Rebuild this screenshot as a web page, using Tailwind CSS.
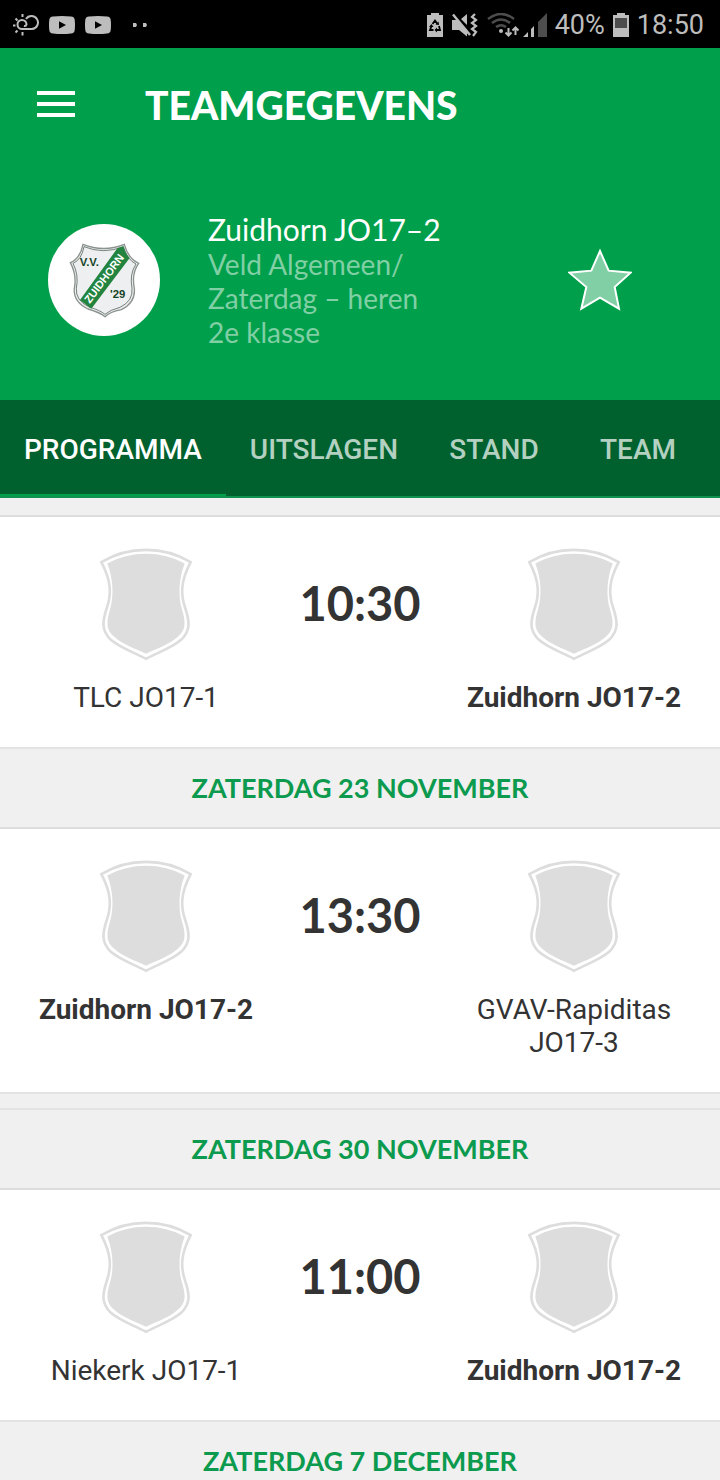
<!DOCTYPE html>
<html lang="nl">
<head>
<meta charset="utf-8">
<meta name="viewport" content="width=device-width, initial-scale=1">
<title>Teamgegevens</title>
<script src="https://cdn.jsdelivr.net/npm/@tailwindcss/browser@4"></script>
</head>
<body class="bg-[#f0f0f0] font-['Roboto',sans-serif] text-[#333333]">
<svg class="hidden" aria-hidden="true">
  <symbol id="shield" viewBox="56 38 284 344">
    <path d="M63 82Q125 45 198 45Q271 45 333 82C302 140 302 180 317 222C330 262 333 288 305 316C275 342 240 352 198 374C156 352 121 342 91 316C63 288 66 262 79 222C94 180 94 140 63 82Z" fill="#fff" stroke="#ddd" stroke-width="8"/>
    <path d="M81 86Q135 57 198 57Q261 57 315 86C297 130 295 185 306 222C318 262 320 284 295 307C268 331 238 341 198 359C158 341 128 331 101 307C76 284 78 262 90 222C101 185 99 130 81 86Z" fill="#ddd"/>
  </symbol>
  <symbol id="video" viewBox="0 0 26 18">
    <path fill="#bdbdbd" fill-rule="evenodd" d="M4 .5Q13-.5 22 .5Q25.500 .8 25.700 4Q26.300 9 25.700 14Q25.500 17.200 22 17.500Q13 18.500 4 17.500Q.5 17.200 .3 14Q-.3 9 .3 4Q.5 .8 4 .5ZM10 5.300V12.700L17 9Z"/>
  </symbol>
</svg>

<div class="flex h-12 items-center justify-between bg-black pt-0.5 pr-4 pl-3 text-[#bdbdbd]">
  <div class="flex items-center gap-2.5">
    <svg class="h-[22px] w-7" viewBox="0 0 28 22" fill="none" stroke="#bdbdbd" stroke-width="2" aria-hidden="true">
      <path d="M14 5A6.500 6.500 0 1 1 20 15H10A4.500 4.500 0 1 1 14.500 10.500Q14 12.500 12 12"/>
      <path d="M10.500 0V3M10.500 18V21.500M1 11.500H3.500M3.500 4.500L5.500 6.500M3.500 18.500L5.500 16.500"/>
    </svg>
    <svg class="-ml-px h-[18px] w-[26px]" aria-hidden="true"><use href="#video"/></svg>
    <svg class="h-[18px] w-[26px]" aria-hidden="true"><use href="#video"/></svg>
    <svg class="ml-3 h-1 w-[14px]" viewBox="0 0 14 4" fill="#bdbdbd" aria-hidden="true"><path d="M0 0H3L4 2L3 4H0ZM10 0H13L14 2L13 4H10Z"/></svg>
  </div>
  <div class="flex items-center gap-2 text-[27px] leading-8">
    <svg class="h-6 w-4" viewBox="0 0 16 24" aria-hidden="true">
      <path fill="#bdbdbd" d="M4 0H12V2H16V24H0V2H4Z"/>
      <g fill="none" stroke="#000" stroke-width="1.800"><path d="M5.500 11L8 7.500L10.500 11M12 13L13 17H9.500M6.500 17H3L4.500 13"/></g>
      <path d="M8.500 11.500L12 12L11.500 8.500ZM10 14.500V19.500L7.500 17ZM2 14L4.500 11L6.500 14Z"/>
    </svg>
    <svg class="h-6 w-[28px]" viewBox="0 0 28 24" aria-hidden="true">
      <path fill="#bdbdbd" d="M1 7H6L16 17V23.500L8 17H1ZM16 1V12L10 6Z"/>
      <path d="M2 1.500L19 22" stroke="#bdbdbd" stroke-width="2.500"/>
      <path d="M24 1L21 4L25 7L21 10L25 13L21 16L25 19L22 23" fill="none" stroke="#bdbdbd" stroke-width="2.200"/>
    </svg>
    <svg class="h-6 w-8" viewBox="0 0 32 24" fill="none" aria-hidden="true">
      <path d="M1 6Q14-4 27 6M5 10Q14 3 23 10M9 14Q14 10.500 19 14" stroke="#4d4d4d" stroke-width="2.500"/>
      <circle cx="14" cy="18" r="2" fill="#bdbdbd"/>
      <path d="M21.500 15V22M18.500 19.500L21.500 22.500L24.500 19.500M28.500 22V15M25.500 17.500L28.500 14.500L31.500 17.500" stroke="#bdbdbd" stroke-width="2"/>
    </svg>
    <svg class="-ml-1 h-6 w-6" viewBox="0 0 24 24" aria-hidden="true">
      <path fill="#bdbdbd" d="M0 24L5 19V24ZM8 16L11 13V24H8Z"/><path fill="#4d4d4d" d="M15 9L24 0V24H15Z"/>
    </svg>
    <span>40%</span>
    <svg class="h-6 w-4" viewBox="0 0 16 24" aria-hidden="true"><path fill="#bdbdbd" d="M4 0H12V2H16V24H0V2H4Z"/><path fill="#4d4d4d" d="M2 5H14V15H2Z"/></svg>
    <time>18:50</time>
  </div>
</div>

<header class="bg-[#009f4b] text-white">
  <div class="flex h-28 items-center gap-[69px] px-9">
    <button type="button" aria-label="Menu" class="flex w-10 flex-col gap-[7px] px-px">
      <span class="h-1 bg-white"></span><span class="h-1 bg-white"></span><span class="h-1 bg-white"></span>
    </button>
    <h1 class="pt-0.5 font-['Lato',sans-serif] text-[39px] leading-none font-black">TEAMGEGEVENS</h1>
  </div>
  <div class="flex h-60 items-center px-12">
    <svg class="size-28 shrink-0" viewBox="55 42 336 336" role="img" aria-label="V.V. Zuidhorn '29">
      <circle cx="223" cy="210" r="168" fill="#fff"/>
      <path d="M160 103Q222 128 284 103Q295 145 327 160Q305 190 314 235Q318 278 275 299Q240 306 226 320Q212 308 175 297Q130 275 134 235Q142 195 122 158Q152 145 160 103Z" fill="#eeeff0" stroke="#8b938e" stroke-width="4"/>
      <path d="M163 110Q222 134 281 110Q292 149 319 162Q299 192 307 235Q311 273 271 292Q240 300 226 313Q212 301 178 291Q137 271 140 235Q148 195 130 160Q156 149 163 110Z" fill="none" stroke="#37483f" stroke-width="2"/>
      <path d="M263 115L281 109Q286 129 300 144L185 296L151 270Z" fill="#238440"/>
      <g font-family="Liberation Sans, sans-serif" font-weight="700">
        <text x="150" y="167" font-size="34" fill="#164326">V.V.</text>
        <text x="241" y="263" font-size="34" fill="#164326">'29</text>
        <text transform="translate(180 282) rotate(-53)" font-size="33" fill="#fff">ZUIDHORN</text>
      </g>
    </svg>
    <div class="ml-12 flex-1 font-['Lato',sans-serif]">
      <h2 class="text-[30px] leading-9">Zuidhorn JO17–2</h2>
      <p class="text-[28px] leading-[34px] text-[#80cfa5]">Veld Algemeen/<br>Zaterdag – heren<br>2e klasse</p>
    </div>
    <button type="button" aria-label="Favoriet" class="mr-10">
      <svg class="block h-16 w-16" viewBox="54 39 192 192" aria-hidden="true"><path d="M150 48L176 107L242 113L194 156L207 221L150 188L94 221L109 156L58 113L124 107Z" fill="#80cfa5" stroke="#fff" stroke-width="6"/></svg>
    </button>
  </div>
</header>

<nav class="flex h-[98px] overflow-hidden border-b-2 border-[#0f9250] bg-[#00612e] text-[28px] font-medium text-[#b3d0c0]">
  <a href="#programma" aria-current="page" class="-mb-0.5 flex min-w-36 items-center justify-center border-b-4 border-[#009f4b] px-6 pt-1.5 text-white">PROGRAMMA</a>
  <a href="#uitslagen" class="flex min-w-36 items-center justify-center px-6 pt-1">UITSLAGEN</a>
  <a href="#stand" class="flex min-w-36 items-center justify-center px-6 pt-1">STAND</a>
  <a href="#team" class="flex min-w-36 items-center justify-center px-6 pt-1">TEAM</a>
</nav>

<main id="programma" class="pt-[17px] text-center text-[28px] leading-[33px]">
  <section class="grid grid-cols-[1fr_136px_1fr] border-y-2 border-t-[#ddd] border-b-[#e3e3e3] bg-white pt-[30px] pb-[33px]">
    <div class="flex flex-col items-center gap-[19px] px-6"><svg class="h-[115px] w-[94px]" aria-hidden="true"><use href="#shield"/></svg><p>TLC JO17-1</p></div>
    <time class="pt-[31px] font-['Lato',sans-serif] text-[47px] leading-[50px] font-bold">10:30</time>
    <div class="flex flex-col items-center gap-[19px] px-6"><svg class="h-[115px] w-[94px]" aria-hidden="true"><use href="#shield"/></svg><p class="font-bold">Zuidhorn JO17-2</p></div>
  </section>

  <h3 class="flex h-[78px] items-center justify-center pb-0.5 font-['Lato',sans-serif] text-[27px] font-bold text-[#0b9a4e]">ZATERDAG 23 NOVEMBER</h3>
  <section class="grid grid-cols-[1fr_136px_1fr] border-y-2 border-t-[#ddd] border-b-[#e3e3e3] bg-white pt-[30px] pb-[33px]">
    <div class="flex flex-col items-center gap-[19px] px-6"><svg class="h-[115px] w-[94px]" aria-hidden="true"><use href="#shield"/></svg><p class="font-bold">Zuidhorn JO17-2</p></div>
    <time class="pt-[31px] font-['Lato',sans-serif] text-[47px] leading-[50px] font-bold">13:30</time>
    <div class="flex flex-col items-center gap-[19px] px-6"><svg class="h-[115px] w-[94px]" aria-hidden="true"><use href="#shield"/></svg><p>GVAV-Rapiditas JO17-3</p></div>
  </section>

  <h3 class="mt-[14px] flex h-20 items-center justify-center border-t-2 border-[#e3e3e3] pb-0.5 font-['Lato',sans-serif] text-[27px] font-bold text-[#0b9a4e]">ZATERDAG 30 NOVEMBER</h3>
  <section class="grid grid-cols-[1fr_136px_1fr] border-y-2 border-t-[#ddd] border-b-[#e3e3e3] bg-white pt-[30px] pb-[33px]">
    <div class="flex flex-col items-center gap-[19px] px-6"><svg class="h-[115px] w-[94px]" aria-hidden="true"><use href="#shield"/></svg><p>Niekerk JO17-1</p></div>
    <time class="pt-[31px] font-['Lato',sans-serif] text-[47px] leading-[50px] font-bold">11:00</time>
    <div class="flex flex-col items-center gap-[19px] px-6"><svg class="h-[115px] w-[94px]" aria-hidden="true"><use href="#shield"/></svg><p class="font-bold">Zuidhorn JO17-2</p></div>
  </section>

  <h3 class="flex h-[78px] items-center justify-center pb-0.5 font-['Lato',sans-serif] text-[27px] font-bold text-[#0b9a4e]">ZATERDAG 7 DECEMBER</h3>
</main>
</body>
</html>
